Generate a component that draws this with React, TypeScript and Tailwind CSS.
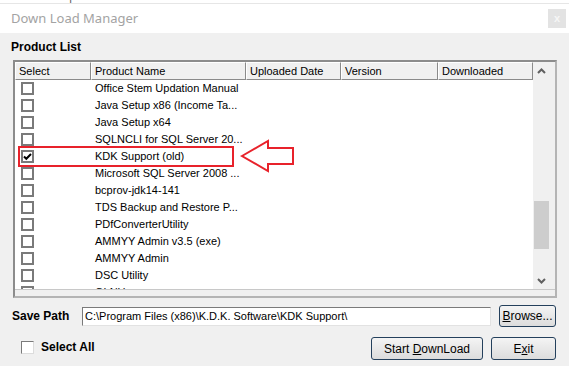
import * as React from 'react';

// Product rows as they show in the list (already clipped with "...")
const products: { name: string; checked?: boolean }[] = [
  { name: 'Office Stem Updation Manual' },
  { name: 'Java Setup x86 (Income Ta...' },
  { name: 'Java Setup x64' },
  { name: 'SQLNCLI for SQL Server 20...' },
  { name: 'KDK Support (old)', checked: true },
  { name: 'Microsoft SQL Server 2008 ...' },
  { name: 'bcprov-jdk14-141' },
  { name: 'TDS Backup and Restore P...' },
  { name: 'PDfConverterUtility' },
  { name: 'AMMYY Admin v3.5 (exe)' },
  { name: 'AMMYY Admin' },
  { name: 'DSC Utility' },
  { name: 'OLNU' },
];

const columns = [
  { label: 'Select', w: 'w-[76px]' },
  { label: 'Product Name', w: 'w-[155px]' },
  { label: 'Uploaded Date', w: 'w-[95px]' },
  { label: 'Version', w: 'w-[97px]' },
  { label: 'Downloaded', w: 'w-[95px]' },
];

function RowCheck({ checked }: { checked?: boolean }) {
  return (
    <div className="w-[13px] h-[13px] border-2 border-[#7a7a7a] bg-white flex items-center justify-center">
      {checked && (
        <svg width="9" height="9" viewBox="0 0 9 9" aria-hidden="true">
          <path d="M1 4.5 L3.3 6.8 L8 2" fill="none" stroke="#000" strokeWidth="2" />
        </svg>
      )}
    </div>
  );
}

function Chevron({ up }: { up?: boolean }) {
  return (
    <svg width="9" height="6" viewBox="0 0 9 6" aria-hidden="true">
      <path
        d={up ? 'M1 5 L4.5 1.5 L8 5' : 'M1 1 L4.5 4.5 L8 1'}
        fill="none"
        stroke="#606060"
        strokeWidth="2"
      />
    </svg>
  );
}

function WinButton({ className = '', children }: { className?: string; children: React.ReactNode }) {
  return (
    <button
      type="button"
      className={`rounded-[3px] border border-[#24405c] bg-gradient-to-b from-[#f4f4f4] to-[#dcdcdc] text-[12px] text-black flex items-center justify-center ${className}`}
    >
      {children}
    </button>
  );
}

export default function App() {
  return (
    <div className="relative w-[569px] h-[366px] overflow-hidden bg-[#f0f0f0] flex flex-col font-['Liberation_Sans',Arial,sans-serif]">
      {/* clipped strip of the window behind */}
      <div className="h-[3px] bg-white overflow-hidden">
        <div className="-mt-[10px] pl-[10px] flex gap-[64px] text-[12px] leading-[12px] text-[#666]">
          <span>Software Update</span>
          <span>Edit</span>
        </div>
      </div>
      <div className="h-px bg-[#e6e6e6]" />

      {/* Title bar */}
      <div className="h-[29px] bg-white flex items-center justify-between pl-[11px] pr-[3px]">
        <span className="text-[13px] text-[#a3a3a3] font-['Noto_Sans',sans-serif]">Down Load Manager</span>
        <div className="w-[18px] h-[19px] bg-[#e3e3e3] flex items-center justify-center text-[11px] leading-none font-bold text-[#f6f6f6]">
          x
        </div>
      </div>

      {/* Body */}
      <div className="flex flex-col pl-[11px] pr-[13px] pt-[6px]">
        <div className="h-[16px] leading-[16px] text-[12px] font-bold text-black">Product List</div>

        {/* List box */}
        <div className="mt-[5px] ml-[2px] w-[544px] h-[238px] border-2 border-t-[#8c8c8c] border-l-[#8c8c8c] border-b-[#b4b4b4] border-r-[#b4b4b4] bg-[#f0f0f0] flex flex-col">
          <div className="h-[228px] bg-white flex border-b border-b-[#c8c8c8]">
            <div className="flex-1 overflow-hidden flex flex-col">
              <div className="h-[18px] flex shrink-0">
                {columns.map((c) => (
                  <div
                    key={c.label}
                    className={`${c.w} h-[18px] shrink-0 bg-[#f0f0f0] border-l border-t border-l-white border-t-white border-r border-b border-r-[#8a8a8a] border-b-[#8a8a8a] pl-[3px] text-[11px] leading-[16px] text-black`}
                  >
                    {c.label}
                  </div>
                ))}
              </div>
              {products.map((p) => (
                <div key={p.name} className="h-[17px] flex shrink-0 items-center">
                  <div className="w-[76px] pl-[6px] shrink-0">
                    <RowCheck checked={p.checked} />
                  </div>
                  <div className="pl-[4px] text-[11px] leading-[17px] text-black whitespace-nowrap">{p.name}</div>
                </div>
              ))}
            </div>

            {/* Scrollbar */}
            <div className="w-[22px] shrink-0 bg-[#f0f0f0] flex flex-col">
              <div className="w-[17px] h-[17px] flex items-center justify-center">
                <Chevron up />
              </div>
              <div className="flex-1 pl-[1px]">
                <div className="mt-[122px] w-[15px] h-[48px] bg-[#cdcdcd]" />
              </div>
              <div className="w-[17px] h-[17px] flex items-center justify-center">
                <Chevron />
              </div>
            </div>
          </div>
        </div>

        {/* Save path */}
        <div className="mt-[7px] h-[22px] flex items-center">
          <div className="w-[71px] pl-[1px] text-[12px] font-bold text-black">Save Path</div>
          <div className="w-[409px] h-[19px] border border-t-[#7a7a7a] border-l-[#7a7a7a] border-b-[#e2e2e2] border-r-[#e2e2e2] bg-white pl-[2px] text-[11px] leading-[17px] text-black whitespace-nowrap overflow-hidden">
            C:\Program Files (x86)\K.D.K. Software\KDK Support\
          </div>
          <WinButton className="ml-[8px] w-[57px] h-[22px]">
            <span className="underline">B</span>rowse...
          </WinButton>
        </div>

        {/* Bottom row */}
        <div className="mt-[10px] h-[23px] flex items-start justify-between">
          <div className="mt-[2px] h-[16px] pl-[10px] flex items-center gap-[7px]">
            <div className="w-[13px] h-[13px] border border-t-[#7a7a7a] border-l-[#7a7a7a] border-b-[#dcdcdc] border-r-[#dcdcdc] bg-white" />
            <span className="text-[12px] font-bold text-black">Select All</span>
          </div>
          <div className="flex gap-[8px]">
            <WinButton className="w-[112px] h-[23px]">
              Start&nbsp;<span className="underline">D</span>ownLoad
            </WinButton>
            <WinButton className="w-[65px] h-[23px]">
              E<span className="underline">x</span>it
            </WinButton>
          </div>
        </div>
      </div>

      {/* Annotation overlays */}
      <div className="absolute left-[18px] top-[146px] w-[216px] h-[21px] border-2 border-[#e8222b]" />
      <svg className="absolute left-0 top-0" width="569" height="366" aria-hidden="true">
        <polygon
          points="242,156 268,141 268,148 293,148 293,164 268,164 268,171"
          fill="white"
          stroke="#e8222b"
          strokeWidth="2"
          strokeLinejoin="miter"
        />
      </svg>
    </div>
  );
}
